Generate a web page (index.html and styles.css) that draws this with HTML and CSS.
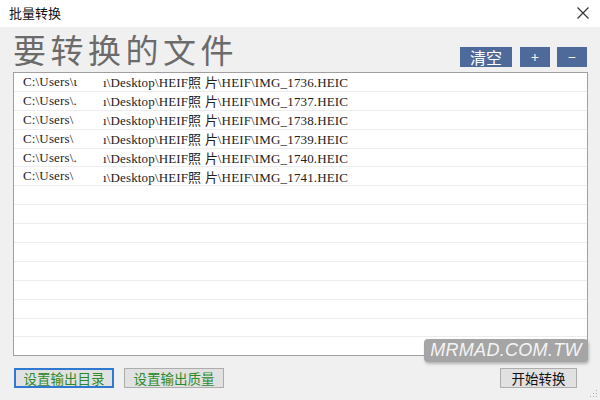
FILE: index.html
```html
<!DOCTYPE html>
<html lang="zh-CN">
<head>
  <meta charset="UTF-8" />
  <title>批量转换</title>
  <link rel="stylesheet" href="styles.css">
</head>
<body>
  <div class="window">
    <div class="titlebar">
      <span class="title">批量转换</span>
      <svg class="close" width="12" height="12" viewBox="0 0 12 12">
        <path d="M0.5 0.5 L11.5 11.5 M11.5 0.5 L0.5 11.5" stroke="#333" stroke-width="1.2" fill="none"/>
      </svg>
    </div>

    <div class="content">
      <div class="head">
        <h1>要转换的文件</h1>
        <div class="tools">
          <button class="tool wide">清空</button>
          <button class="tool">+</button>
          <button class="tool">−</button>
        </div>
      </div>

      <div class="list">
        <div class="row"><span class="user">C:\Users\ι</span><span class="path">ı\Desktop\HEIF照 片\HEIF\IMG_1736.HEIC</span></div>
        <div class="row"><span class="user">C:\Users\.</span><span class="path">ı\Desktop\HEIF照 片\HEIF\IMG_1737.HEIC</span></div>
        <div class="row"><span class="user">C:\Users\</span><span class="path">ı\Desktop\HEIF照 片\HEIF\IMG_1738.HEIC</span></div>
        <div class="row"><span class="user">C:\Users\</span><span class="path">ı\Desktop\HEIF照 片\HEIF\IMG_1739.HEIC</span></div>
        <div class="row"><span class="user">C:\Users\.</span><span class="path">ı\Desktop\HEIF照 片\HEIF\IMG_1740.HEIC</span></div>
        <div class="row"><span class="user">C:\Users\</span><span class="path">ı\Desktop\HEIF照 片\HEIF\IMG_1741.HEIC</span></div>
        <div class="row"></div>
        <div class="row"></div>
        <div class="row"></div>
        <div class="row"></div>
        <div class="row"></div>
        <div class="row"></div>
        <div class="row"></div>
        <div class="row"></div>
        <div class="row"></div>
      </div>

      <div class="footer">
        <div class="left">
          <button class="btn green focus">设置输出目录</button>
          <button class="btn green">设置输出质量</button>
        </div>
        <button class="btn start">开始转换</button>
      </div>

      <div class="watermark">MRMAD.COM.TW</div>
      <svg class="grip" width="8" height="8" viewBox="0 0 8 8">
        <rect x="6" y="0" width="1" height="1" fill="#aaa"/>
        <rect x="3" y="3" width="1" height="1" fill="#aaa"/>
        <rect x="6" y="3" width="1" height="1" fill="#aaa"/>
        <rect x="0" y="6" width="1" height="1" fill="#aaa"/>
        <rect x="3" y="6" width="1" height="1" fill="#aaa"/>
        <rect x="6" y="6" width="1" height="1" fill="#aaa"/>
      </svg>
    </div>
  </div>
</body>
</html>
```

FILE: styles.css
```css
:root {
  --bg: #f0f0f0;
  --blue: #4e6a9b;
  --border: #a0a0a0;
  --line: #ededed;
  --green: #2a8a2a;
}
* { box-sizing: border-box; }
body {
  margin: 0;
  font-family: "Noto Sans CJK SC", "Noto Sans", sans-serif;
  background: var(--bg);
}
.window {
  width: 600px;
  height: 400px;
  display: flex;
  flex-direction: column;
}
.titlebar {
  height: 27px;
  background: #ffffff;
  display: flex;
  align-items: center;
  justify-content: space-between;
  padding: 0 11px 2px 9px;
}
.title {
  font-size: 13px;
  color: #111;
}
.close { margin-top: 1px; }
.content {
  flex: 1;
  position: relative;
  padding: 0 12px 0 13px;
}
.head {
  height: 45px;
  display: flex;
  align-items: flex-start;
  justify-content: space-between;
}
h1 {
  margin: 0;
  margin-top: 2px;
  font-size: 33px;
  font-weight: 400;
  letter-spacing: 4.5px;
  color: #6b6b6b;
  line-height: 40px;
}
.tools {
  display: flex;
  gap: 7px;
  margin-top: 20px;
  margin-right: 1px;
}
.tool {
  width: 30px;
  height: 20px;
  border: none;
  padding: 0;
  background: var(--blue);
  color: #fff;
  font-family: inherit;
  font-size: 14px;
  line-height: 20px;
}
.tool.wide {
  width: 52px;
  font-size: 16px;
  margin-right: 1px;
}
.list {
  height: 284px;
  background: #ffffff;
  border: 1px solid var(--border);
  overflow: hidden;
}
.row {
  height: 18.9px;
  border-bottom: 1px solid var(--line);
  display: flex;
  align-items: center;
  font-family: "Liberation Serif", serif;
  font-size: 13px;
  letter-spacing: 0.15px;
  color: #222;
}
.user {
  width: 89px;
  padding-left: 9px;
}
.footer {
  display: flex;
  justify-content: space-between;
  align-items: center;
  margin-top: 12px;
}
.left {
  display: flex;
  gap: 10px;
}
.btn {
  height: 20px;
  padding: 0;
  background: #e1e1e1;
  border: 1px solid #adadad;
  font-family: inherit;
  font-size: 13.5px;
  line-height: 18px;
}
.btn.green {
  width: 100px;
  color: var(--green);
}
.btn.focus {
  margin-left: 1px;
  border: 2px solid #2f7ad0;
  line-height: 16px;
}
.btn.start {
  width: 77px;
  margin-right: 11px;
  color: #111;
}
.watermark {
  position: absolute;
  left: 424px;
  top: 312px;
  width: 164px;
  height: 23px;
  background: #a5a5a5;
  border-radius: 4px;
  box-shadow: 1px 2px 3px rgba(0, 0, 0, 0.25);
  color: #f4f4f4;
  font-family: "Liberation Sans", sans-serif;
  font-style: italic;
  font-size: 18px;
  line-height: 23px;
  text-align: center;
  letter-spacing: 0.3px;
}
.grip {
  position: absolute;
  right: 2px;
  bottom: 2px;
}
```
